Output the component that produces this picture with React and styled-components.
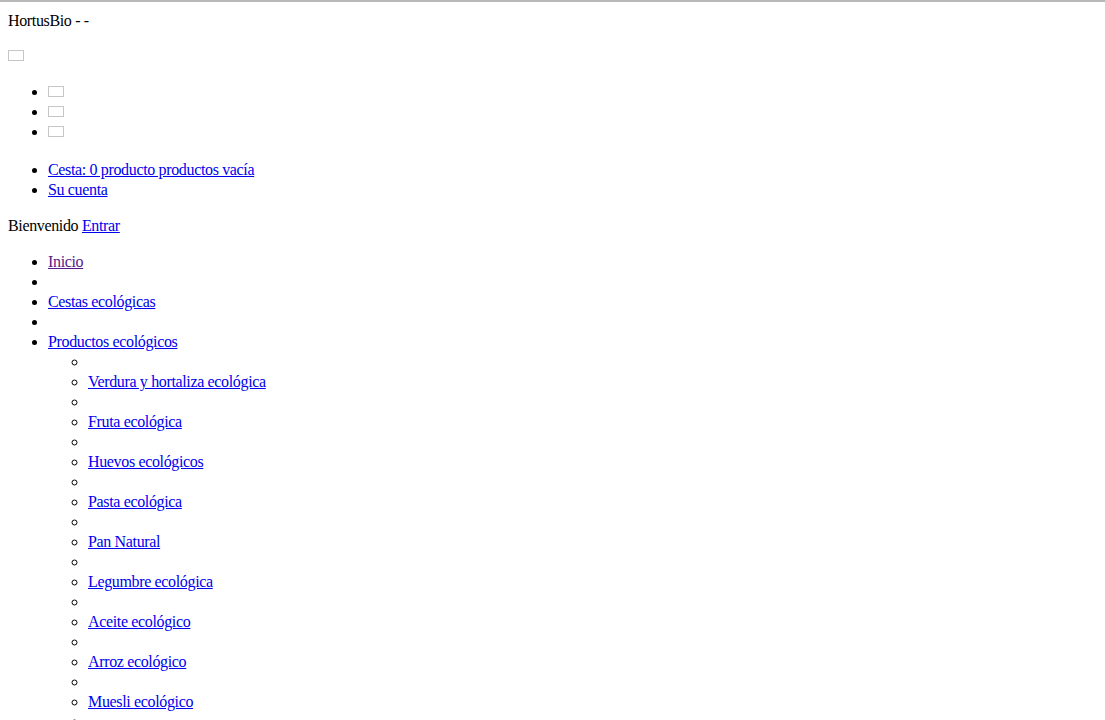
import React from "react";
import styled, { createGlobalStyle } from "styled-components";

const GlobalStyle = createGlobalStyle`
  html {
    border-top: 2px solid #b9b9b9;
    background: #ffffff;
  }
  body {
    margin: 8px;
    font-family: "Liberation Serif", "Times New Roman", serif;
    font-size: 16px;
    line-height: 20px;
    letter-spacing: -0.35px;
    color: #000000;
    background: #ffffff;
  }
`;

const Header = styled.div`
  padding-top: 1px;
  margin-bottom: -1px;
`;

const Block = styled.div`
  margin: 16px 0;
`;

const Para = styled.p`
  margin: 16px 0;
`;

const ImgBox = styled.span`
  display: inline-block;
  box-sizing: border-box;
  width: 16px;
  height: 11px;
  border: 1px solid #c6c6c6;
  vertical-align: baseline;
`;

const List = styled.ul`
  margin: 16px 0 ${(props) => (props.images ? "18px" : "16px")};
  padding-left: 40px;
  list-style-type: disc;
`;

const SubList = styled.ul`
  margin: 0;
  padding-left: 40px;
  list-style-type: circle;
`;

const Item = styled.li`
  min-height: 20px;
`;

const Link = styled.a`
  color: ${(props) => (props.visited ? "#551a8b" : "#0000ee")};
  text-decoration: underline;
  cursor: pointer;
`;

const categories = [
  "Verdura y hortaliza ecológica",
  "Fruta ecológica",
  "Huevos ecológicos",
  "Pasta ecológica",
  "Pan Natural",
  "Legumbre ecológica",
  "Aceite ecológico",
  "Arroz ecológico",
  "Muesli ecológico",
  "Especias ecológicas",
  "Frutos secos ecológicos",
];

const App = () => (
  <>
    <GlobalStyle />
    <Header>HortusBio - -</Header>
    <Block>
      <ImgBox />
    </Block>
    <List images>
      <Item>
        <ImgBox />
      </Item>
      <Item>
        <ImgBox />
      </Item>
      <Item>
        <ImgBox />
      </Item>
    </List>
    <List>
      <Item>
        <Link href="#">Cesta: 0 producto productos vacía</Link>
      </Item>
      <Item>
        <Link href="#">Su cuenta</Link>
      </Item>
    </List>
    <Para>
      Bienvenido <Link href="#">Entrar</Link>
    </Para>
    <List>
      <Item>
        <Link href="#" visited>
          Inicio
        </Link>
      </Item>
      <Item />
      <Item>
        <Link href="#">Cestas ecológicas</Link>
      </Item>
      <Item />
      <Item>
        <Link href="#">Productos ecológicos</Link>
        <SubList>
          {categories.map((name, index) => (
            <React.Fragment key={index}>
              <Item />
              <Item>
                <Link href="#">{name}</Link>
              </Item>
            </React.Fragment>
          ))}
        </SubList>
      </Item>
    </List>
  </>
);

export default App;
